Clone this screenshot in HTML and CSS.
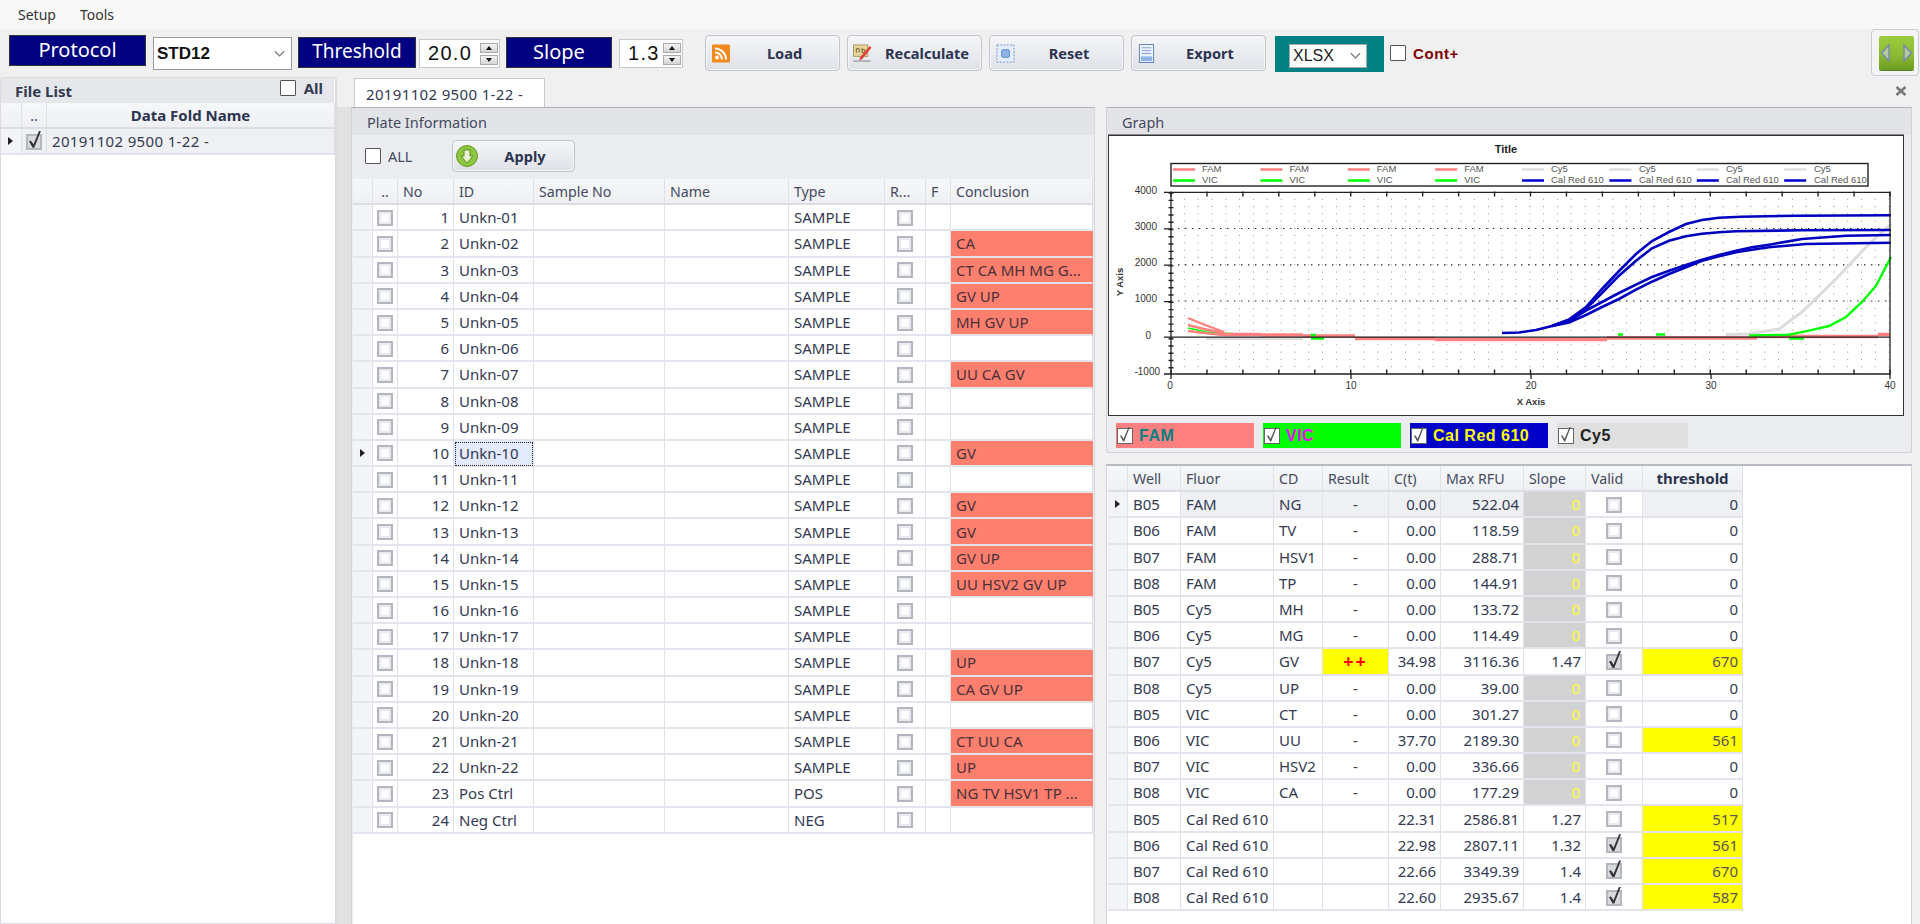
FILE: index.html
```html
<!DOCTYPE html>
<html lang="en">
<head>
    <meta charset="UTF-8">
    <title>Plate Analysis</title>
    <link rel="stylesheet" href="styles.css">
</head>
<body>
    <nav class="menubar">
        <span>Setup</span>
        <span>Tools</span>
    </nav>

    <header class="toolbar">
        <div class="tag tag-protocol">Protocol</div>
        <div class="combo"><b>STD12</b><svg class="chev" viewBox="0 0 12 8"><path d="M1 1l5 5 5-5"/></svg></div>
        <div class="tag tag-threshold">Threshold</div>
        <div class="spin spin-threshold"><span>20.0</span><i class="arrows"><i class="up"></i><i class="down"></i></i></div>
        <div class="tag tag-slope">Slope</div>
        <div class="spin spin-slope"><span>1.3</span><i class="arrows"><i class="up"></i><i class="down"></i></i></div>

        <button class="btn btn-load">
            <svg viewBox="0 0 18 18"><rect width="18" height="18" rx="1" fill="#f08a1c"/><circle cx="5" cy="13" r="2" fill="#fff"/><path d="M3 8a7 7 0 0 1 7 7M3 4a11 11 0 0 1 11 11" fill="none" stroke="#fff" stroke-width="2"/></svg>
            <span>Load</span>
        </button>
        <button class="btn btn-recalc">
            <svg viewBox="0 0 21 20"><rect x="1" y="1" width="15" height="12" fill="#e8d49a" stroke="#a89868"/><path d="M4 9V5h3v4M10 4v5h3V6h-3" fill="none" stroke="#706030"/><path d="M8 14L18 2l2 2-10 12-3 1z" fill="#e0403c"/><rect x="1" y="17" width="18" height="2" fill="#b0b0b0"/></svg>
            <span>Recalculate</span>
        </button>
        <button class="btn btn-reset">
            <svg viewBox="0 0 20 20"><rect x="1" y="1" width="18" height="18" fill="#e4eefa" stroke="#6a90cc" stroke-dasharray="2 1.5"/><rect x="6" y="6" width="8" height="8" rx="1" fill="#8fb4e4" stroke="#5c88c4"/></svg>
            <span>Reset</span>
        </button>
        <button class="btn btn-export">
            <svg viewBox="0 0 16 20"><rect x=".5" y=".5" width="15" height="19" fill="#eef3fb" stroke="#5c80b8"/><path d="M3 4h10M3 7h10M3 10h10" stroke="#7c9ccc"/><rect x="2" y="13" width="12" height="5" fill="#8fb4e4"/></svg>
            <span>Export</span>
        </button>

        <div class="format">
            <div class="format-box">XLSX<svg class="chev" viewBox="0 0 12 8"><path d="M1 1l5 5 5-5"/></svg></div>
        </div>
        <label class="cont"><span class="plain-box"></span>Cont+</label>

        <div class="nav-frame">
            <div class="nav-btn">
                <svg viewBox="0 0 35 34"><path d="M10 9v16L2.500 17zM25 9v16l7.500-8z" fill="#b4c8a0" stroke="#7888a8" stroke-width="1.4"/></svg>
            </div>
        </div>
    </header>

    <main class="workspace">
        <aside class="files">
            <div class="files-head">
                <strong>File List</strong>
                <label class="files-all"><span class="plain-box"></span>All</label>
            </div>
            <table class="grid files-grid">
                <colgroup><col class="fc1"><col class="fc2"><col></colgroup>
                <thead><tr><th></th><th class="mid">..</th><th class="mid strong">Data Fold Name</th></tr></thead>
                <tbody>
                    <tr class="current"><td class="rowhead"><i class="pointer"></i></td><td class="mid"><span class="cb on"></span></td><td class="wide">20191102 9500 1-22 -</td></tr>
                </tbody>
            </table>
        </aside>

        <section class="docs">
            <div class="tabstrip">
                <div class="tab">20191102 9500 1-22 -</div>
                <svg class="close" viewBox="0 0 12 10"><path d="M1.500 1l9 8M10.500 1l-9 8"/></svg>
            </div>

            <div class="tabpage">
                <section class="plate">
                    <h2 class="panel-title">Plate Information</h2>
                    <div class="plate-tools">
                        <label class="plate-all"><span class="plain-box"></span>ALL</label>
                        <button class="btn btn-apply">
                            <svg viewBox="0 0 22 22"><circle cx="11" cy="11" r="10.500" fill="#8cc63f" stroke="#6a9a2c"/><path d="M8 5h6v6h3l-6 7-6-7h3z" fill="#e8f5d0" stroke="#5c8c24"/></svg>
                            <span>Apply</span>
                        </button>
                    </div>
                    <div class="plate-body">
                        <table class="grid plate-grid">
                            <colgroup><col class="p1"><col class="p2"><col class="p3"><col class="p4"><col class="p5"><col class="p6"><col class="p7"><col class="p8"><col class="p9"><col></colgroup>
                            <thead>
                                <tr><th></th><th class="mid">..</th><th>No</th><th>ID</th><th>Sample No</th><th>Name</th><th>Type</th><th>R...</th><th>F</th><th>Conclusion</th></tr>
                            </thead>
                            <tbody>
                                <tr><td class="rowhead"></td><td class="mid"><span class="cb"></span></td><td class="num">1</td><td>Unkn-01</td><td></td><td></td><td>SAMPLE</td><td class="mid"><span class="cb"></span></td><td></td><td></td></tr>
                                <tr><td class="rowhead"></td><td class="mid"><span class="cb"></span></td><td class="num">2</td><td>Unkn-02</td><td></td><td></td><td>SAMPLE</td><td class="mid"><span class="cb"></span></td><td></td><td class="hit">CA</td></tr>
                                <tr><td class="rowhead"></td><td class="mid"><span class="cb"></span></td><td class="num">3</td><td>Unkn-03</td><td></td><td></td><td>SAMPLE</td><td class="mid"><span class="cb"></span></td><td></td><td class="hit">CT CA MH MG G...</td></tr>
                                <tr><td class="rowhead"></td><td class="mid"><span class="cb"></span></td><td class="num">4</td><td>Unkn-04</td><td></td><td></td><td>SAMPLE</td><td class="mid"><span class="cb"></span></td><td></td><td class="hit">GV UP</td></tr>
                                <tr><td class="rowhead"></td><td class="mid"><span class="cb"></span></td><td class="num">5</td><td>Unkn-05</td><td></td><td></td><td>SAMPLE</td><td class="mid"><span class="cb"></span></td><td></td><td class="hit">MH GV UP</td></tr>
                                <tr><td class="rowhead"></td><td class="mid"><span class="cb"></span></td><td class="num">6</td><td>Unkn-06</td><td></td><td></td><td>SAMPLE</td><td class="mid"><span class="cb"></span></td><td></td><td></td></tr>
                                <tr><td class="rowhead"></td><td class="mid"><span class="cb"></span></td><td class="num">7</td><td>Unkn-07</td><td></td><td></td><td>SAMPLE</td><td class="mid"><span class="cb"></span></td><td></td><td class="hit">UU CA GV</td></tr>
                                <tr><td class="rowhead"></td><td class="mid"><span class="cb"></span></td><td class="num">8</td><td>Unkn-08</td><td></td><td></td><td>SAMPLE</td><td class="mid"><span class="cb"></span></td><td></td><td></td></tr>
                                <tr><td class="rowhead"></td><td class="mid"><span class="cb"></span></td><td class="num">9</td><td>Unkn-09</td><td></td><td></td><td>SAMPLE</td><td class="mid"><span class="cb"></span></td><td></td><td></td></tr>
                                <tr><td class="rowhead"><i class="pointer"></i></td><td class="mid"><span class="cb"></span></td><td class="num">10</td><td class="focus">Unkn-10</td><td></td><td></td><td>SAMPLE</td><td class="mid"><span class="cb"></span></td><td></td><td class="hit">GV</td></tr>
                                <tr><td class="rowhead"></td><td class="mid"><span class="cb"></span></td><td class="num">11</td><td>Unkn-11</td><td></td><td></td><td>SAMPLE</td><td class="mid"><span class="cb"></span></td><td></td><td></td></tr>
                                <tr><td class="rowhead"></td><td class="mid"><span class="cb"></span></td><td class="num">12</td><td>Unkn-12</td><td></td><td></td><td>SAMPLE</td><td class="mid"><span class="cb"></span></td><td></td><td class="hit">GV</td></tr>
                                <tr><td class="rowhead"></td><td class="mid"><span class="cb"></span></td><td class="num">13</td><td>Unkn-13</td><td></td><td></td><td>SAMPLE</td><td class="mid"><span class="cb"></span></td><td></td><td class="hit">GV</td></tr>
                                <tr><td class="rowhead"></td><td class="mid"><span class="cb"></span></td><td class="num">14</td><td>Unkn-14</td><td></td><td></td><td>SAMPLE</td><td class="mid"><span class="cb"></span></td><td></td><td class="hit">GV UP</td></tr>
                                <tr><td class="rowhead"></td><td class="mid"><span class="cb"></span></td><td class="num">15</td><td>Unkn-15</td><td></td><td></td><td>SAMPLE</td><td class="mid"><span class="cb"></span></td><td></td><td class="hit">UU HSV2 GV UP</td></tr>
                                <tr><td class="rowhead"></td><td class="mid"><span class="cb"></span></td><td class="num">16</td><td>Unkn-16</td><td></td><td></td><td>SAMPLE</td><td class="mid"><span class="cb"></span></td><td></td><td></td></tr>
                                <tr><td class="rowhead"></td><td class="mid"><span class="cb"></span></td><td class="num">17</td><td>Unkn-17</td><td></td><td></td><td>SAMPLE</td><td class="mid"><span class="cb"></span></td><td></td><td></td></tr>
                                <tr><td class="rowhead"></td><td class="mid"><span class="cb"></span></td><td class="num">18</td><td>Unkn-18</td><td></td><td></td><td>SAMPLE</td><td class="mid"><span class="cb"></span></td><td></td><td class="hit">UP</td></tr>
                                <tr><td class="rowhead"></td><td class="mid"><span class="cb"></span></td><td class="num">19</td><td>Unkn-19</td><td></td><td></td><td>SAMPLE</td><td class="mid"><span class="cb"></span></td><td></td><td class="hit">CA GV UP</td></tr>
                                <tr><td class="rowhead"></td><td class="mid"><span class="cb"></span></td><td class="num">20</td><td>Unkn-20</td><td></td><td></td><td>SAMPLE</td><td class="mid"><span class="cb"></span></td><td></td><td></td></tr>
                                <tr><td class="rowhead"></td><td class="mid"><span class="cb"></span></td><td class="num">21</td><td>Unkn-21</td><td></td><td></td><td>SAMPLE</td><td class="mid"><span class="cb"></span></td><td></td><td class="hit">CT UU CA</td></tr>
                                <tr><td class="rowhead"></td><td class="mid"><span class="cb"></span></td><td class="num">22</td><td>Unkn-22</td><td></td><td></td><td>SAMPLE</td><td class="mid"><span class="cb"></span></td><td></td><td class="hit">UP</td></tr>
                                <tr><td class="rowhead"></td><td class="mid"><span class="cb"></span></td><td class="num">23</td><td>Pos Ctrl</td><td></td><td></td><td>POS</td><td class="mid"><span class="cb"></span></td><td></td><td class="hit">NG TV HSV1 TP ...</td></tr>
                                <tr><td class="rowhead"></td><td class="mid"><span class="cb"></span></td><td class="num">24</td><td>Neg Ctrl</td><td></td><td></td><td>NEG</td><td class="mid"><span class="cb"></span></td><td></td><td></td></tr>
                            </tbody>
                        </table>
                    </div>
                </section>

                <div class="analysis">
                    <section class="graph">
                        <h2 class="panel-title">Graph</h2>
                        <div class="chart">
                            <svg viewBox="1110 137 794 279">
                                <defs>
                                    <pattern id="dots" x="1172" y="193.4" width="13.82" height="7.28" patternUnits="userSpaceOnUse">
                                        <rect x="13" y="6.500" width="1" height="1" fill="#555"/>
                                    </pattern>
                                </defs>

                                <text class="t-title" x="1507" y="154" text-anchor="middle">Title</text>

                                <!-- legend -->
                                <rect x="1172" y="164.5" width="697" height="22.5" fill="#fff" stroke="#222" stroke-width="1.4"/>
                                <g class="lg-fam"><path d="M1174 170.5h22M1261.4 170.5h22M1348.8 170.5h22M1436.2 170.5h22"/></g>
                                <g class="lg-cy5"><path d="M1523 170.5h22M1610.4 170.5h22M1697.8 170.5h22M1785.2 170.5h22"/></g>
                                <g class="lg-vic"><path d="M1174 181.5h22M1261.4 181.5h22M1348.8 181.5h22M1436.2 181.5h22"/></g>
                                <g class="lg-cal"><path d="M1523 181.5h22M1610.4 181.5h22M1697.8 181.5h22M1785.2 181.5h22"/></g>
                                <g class="t-legend">
                                    <text x="1203" y="172.5">FAM</text><text x="1290.4" y="172.5">FAM</text><text x="1377.8" y="172.5">FAM</text><text x="1465.2" y="172.5">FAM</text>
                                    <text x="1552" y="172.5">Cy5</text><text x="1640" y="172.5">Cy5</text><text x="1727" y="172.5">Cy5</text><text x="1815" y="172.5">Cy5</text>
                                    <text x="1203" y="183.5">VIC</text><text x="1290.4" y="183.5">VIC</text><text x="1377.8" y="183.5">VIC</text><text x="1465.2" y="183.5">VIC</text>
                                    <text x="1552" y="183.5">Cal Red 610</text><text x="1640" y="183.5">Cal Red 610</text><text x="1727" y="183.5">Cal Red 610</text><text x="1815" y="183.5">Cal Red 610</text>
                                </g>

                                <!-- grid -->
                                <rect x="1172" y="193.4" width="719" height="181.6" fill="url(#dots)"/>
                                <path class="major" d="M1172 229.5h719M1172 265.8h719M1172 302h719"/>

                                <!-- curves -->
                                <g class="curve c-cy5">
                                    <path d="M1207 339.5h97"/>
                                    <path d="M1727 335.5L1750 335 1780 330 1803 313 1820 296.7 1837 280 1853 263 1870 245 1892 225"/>
                                </g>
                                <g class="curve c-vic">
                                    <path class="thin" d="M1189 326L1207 331 1225 334 1240 335"/>
                                    <path class="thin" d="M1189 329L1207 333 1225 335"/>
                                </g>
                                <g class="curve c-fam">
                                    <path d="M1189 319L1205 325.5 1225 333"/>
                                    <path d="M1189 326L1205 330 1225 334"/>
                                    <path d="M1189 332L1205 334 1225 336"/>
                                    <path class="thick" d="M1225 335.5h37M1262 336h42M1304 337h52M1356 339.5h80M1436 340.5h172M1608 339h150M1754 337.5h125M1879 335.5h12"/>
                                </g>
                                <g class="curve c-vic">
                                    <path d="M1312 336h5M1312 339.5h13M1619 335.5h5M1657 335.5h9M1790 339.5h15"/>
                                    <path d="M1750 336.5L1790 335.7 1810 331.7 1830 327 1847 318 1863 303 1877 286.7 1892 258"/>
                                </g>
                                <g class="curve c-cal">
                                    <path d="M1503 334L1520 333.5 1537 331 1553 327 1570 320.5 1587 308 1603 290 1620 272 1637 255 1653 242 1670 233 1687 225 1703 221 1720 218.7 1742 217.7 1798 216.7 1892 216.3"/>
                                    <path d="M1553 327L1570 321 1587 310 1603 294 1620 276.7 1637 261.7 1653 249.3 1670 241.7 1687 237.3 1703 234.7 1720 233.3 1737 232.3 1802 231.3 1892 231"/>
                                    <path d="M1553 327L1570 322 1587 311.7 1603 303 1620 294 1637 285.7 1653 278 1670 271.7 1687 266 1703 260.7 1720 256 1737 251.7 1753 248.3 1770 245.7 1803 240 1847 236.7 1892 236"/>
                                    <path d="M1553 327L1570 323.500 1587 316 1603 308 1620 300 1637 290.7 1653 282.7 1670 275 1687 268.3 1703 261.7 1720 257.3 1737 253.3 1753 250.7 1770 248.3 1807 245 1892 243.7"/>
                                </g>

                                <!-- axes -->
                                <path class="axis" d="M1172 193.4V375H1891V193.4H1172M1172 338.2H1891"/>
                                <line class="tick" x1="1172" y1="193.4" x2="1172" y2="375" stroke-dasharray="1.4 5.88"/>
                                <path class="axis" d="M1165 193.4h7M1165 229.8h7M1165 266.2h7M1165 302.6h7M1165 338.2h7M1165 375h7"/>
                                <line class="tick-x" x1="1171.3" y1="373" x2="1892" y2="373" stroke-dasharray="1.4 34.55"/>
                                <line class="tick-x" x1="1171.3" y1="195" x2="1892" y2="195" stroke-dasharray="1.4 34.55"/>
                                <path class="axis" d="M1172 375v5M1352 375v5M1532 375v5M1712 375v5M1891 375v5"/>

                                <g class="t-axis" text-anchor="end">
                                    <text x="1158" y="194.5">4000</text>
                                    <text x="1158" y="230.7">3000</text>
                                    <text x="1158" y="266.7">2000</text>
                                    <text x="1158" y="303">1000</text>
                                    <text x="1152" y="339.5">0</text>
                                    <text x="1161" y="375.5">-1000</text>
                                </g>
                                <g class="t-axis" text-anchor="middle">
                                    <text x="1171" y="390">0</text>
                                    <text x="1352" y="390">10</text>
                                    <text x="1532" y="390">20</text>
                                    <text x="1712" y="390">30</text>
                                    <text x="1891" y="390">40</text>
                                </g>
                                <text class="t-label" x="1532" y="406" text-anchor="middle">X Axis</text>
                                <text class="t-label" transform="translate(1124 283) rotate(-90)" text-anchor="middle">Y Axis</text>
                            </svg>
                        </div>
                        <div class="channels">
                            <label class="channel ch-fam"><span class="cb-lite"></span>FAM</label>
                            <label class="channel ch-vic"><span class="cb-lite"></span>VIC</label>
                            <label class="channel ch-cal"><span class="cb-lite"></span>Cal Red 610</label>
                            <label class="channel ch-cy5"><span class="cb-lite"></span>Cy5</label>
                        </div>
                    </section>

                    <div class="wells">
                        <table class="grid well-grid">
                            <colgroup><col class="w1"><col class="w2"><col class="w3"><col class="w4"><col class="w5"><col class="w6"><col class="w7"><col class="w8"><col class="w9"><col class="w10"></colgroup>
                            <thead>
                                <tr><th></th><th>Well</th><th>Fluor</th><th>CD</th><th>Result</th><th>C(t)</th><th>Max RFU</th><th>Slope</th><th>Valid</th><th class="mid strong">threshold</th></tr>
                            </thead>
                            <tbody>
                                <tr class="current"><td class="rowhead"><i class="pointer"></i></td><td class="blank">B05</td><td>FAM</td><td>NG</td><td class="mid">-</td><td class="num">0.00</td><td class="num">522.04</td><td class="off">0</td><td class="mid blank"><span class="cb"></span></td><td class="num">0</td></tr>
                                <tr><td class="rowhead"></td><td>B06</td><td>FAM</td><td>TV</td><td class="mid">-</td><td class="num">0.00</td><td class="num">118.59</td><td class="off">0</td><td class="mid"><span class="cb"></span></td><td class="num">0</td></tr>
                                <tr><td class="rowhead"></td><td>B07</td><td>FAM</td><td>HSV1</td><td class="mid">-</td><td class="num">0.00</td><td class="num">288.71</td><td class="off">0</td><td class="mid"><span class="cb"></span></td><td class="num">0</td></tr>
                                <tr><td class="rowhead"></td><td>B08</td><td>FAM</td><td>TP</td><td class="mid">-</td><td class="num">0.00</td><td class="num">144.91</td><td class="off">0</td><td class="mid"><span class="cb"></span></td><td class="num">0</td></tr>
                                <tr><td class="rowhead"></td><td>B05</td><td>Cy5</td><td>MH</td><td class="mid">-</td><td class="num">0.00</td><td class="num">133.72</td><td class="off">0</td><td class="mid"><span class="cb"></span></td><td class="num">0</td></tr>
                                <tr><td class="rowhead"></td><td>B06</td><td>Cy5</td><td>MG</td><td class="mid">-</td><td class="num">0.00</td><td class="num">114.49</td><td class="off">0</td><td class="mid"><span class="cb"></span></td><td class="num">0</td></tr>
                                <tr><td class="rowhead"></td><td>B07</td><td>Cy5</td><td>GV</td><td class="mid plus">++</td><td class="num">34.98</td><td class="num">3116.36</td><td class="num">1.47</td><td class="mid"><span class="cb on"></span></td><td class="num flag">670</td></tr>
                                <tr><td class="rowhead"></td><td>B08</td><td>Cy5</td><td>UP</td><td class="mid">-</td><td class="num">0.00</td><td class="num">39.00</td><td class="off">0</td><td class="mid"><span class="cb"></span></td><td class="num">0</td></tr>
                                <tr><td class="rowhead"></td><td>B05</td><td>VIC</td><td>CT</td><td class="mid">-</td><td class="num">0.00</td><td class="num">301.27</td><td class="off">0</td><td class="mid"><span class="cb"></span></td><td class="num">0</td></tr>
                                <tr><td class="rowhead"></td><td>B06</td><td>VIC</td><td>UU</td><td class="mid">-</td><td class="num">37.70</td><td class="num">2189.30</td><td class="off">0</td><td class="mid"><span class="cb"></span></td><td class="num flag">561</td></tr>
                                <tr><td class="rowhead"></td><td>B07</td><td>VIC</td><td>HSV2</td><td class="mid">-</td><td class="num">0.00</td><td class="num">336.66</td><td class="off">0</td><td class="mid"><span class="cb"></span></td><td class="num">0</td></tr>
                                <tr><td class="rowhead"></td><td>B08</td><td>VIC</td><td>CA</td><td class="mid">-</td><td class="num">0.00</td><td class="num">177.29</td><td class="off">0</td><td class="mid"><span class="cb"></span></td><td class="num">0</td></tr>
                                <tr><td class="rowhead"></td><td>B05</td><td>Cal Red 610</td><td></td><td></td><td class="num">22.31</td><td class="num">2586.81</td><td class="num">1.27</td><td class="mid"><span class="cb"></span></td><td class="num flag">517</td></tr>
                                <tr><td class="rowhead"></td><td>B06</td><td>Cal Red 610</td><td></td><td></td><td class="num">22.98</td><td class="num">2807.11</td><td class="num">1.32</td><td class="mid"><span class="cb on"></span></td><td class="num flag">561</td></tr>
                                <tr><td class="rowhead"></td><td>B07</td><td>Cal Red 610</td><td></td><td></td><td class="num">22.66</td><td class="num">3349.39</td><td class="num">1.4</td><td class="mid"><span class="cb on"></span></td><td class="num flag">670</td></tr>
                                <tr><td class="rowhead"></td><td>B08</td><td>Cal Red 610</td><td></td><td></td><td class="num">22.60</td><td class="num">2935.67</td><td class="num">1.4</td><td class="mid"><span class="cb on"></span></td><td class="num flag">587</td></tr>
                            </tbody>
                        </table>
                    </div>
                </div>
            </div>
        </section>
    </main>
</body>
</html>
```

FILE: styles.css
```css
/* General */
* {
    box-sizing: border-box;
}

html, body {
    height: 100%;
}

body {
    margin: 0;
    display: flex;
    flex-direction: column;
    overflow: hidden;
    font-family: "Noto Sans", "Liberation Sans", sans-serif;
    font-size: 15px;
    color: #333a52;
    background-color: #f0f0f0;
}

i {
    font-style: normal;
}

/* Menu */
.menubar {
    height: 29px;
    display: flex;
    align-items: center;
    gap: 24px;
    padding: 0 0 0 18px;
    background-color: #f8f8f8;
    font-size: 14px;
    color: #333;
}

/* Toolbar */
.toolbar {
    position: relative;
    height: 48px;
    display: flex;
    align-items: flex-start;
    padding: 6px 0 0 9px;
}

.tag {
    height: 31px;
    margin-top: 2px;
    background-color: #000080;
    border: 1px solid #333;
    color: #fff;
    font-size: 20px;
    line-height: 27px;
    text-align: center;
}

.tag-protocol {
    width: 137px;
    margin-top: 0;
}

.tag-threshold {
    width: 118px;
    margin-left: 6px;
    font-size: 19px;
}

.tag-slope {
    width: 106px;
    margin-left: 6px;
}

.combo {
    width: 139px;
    height: 33px;
    margin: 2px 0 0 7px;
    display: flex;
    align-items: center;
    justify-content: space-between;
    padding: 0 6px 0 3px;
    background-color: #fff;
    border: 1px solid #999;
    color: #111;
    font-family: "Liberation Sans", sans-serif;
    font-size: 17px;
}

.chev {
    width: 11px;
    height: 8px;
    fill: none;
    stroke: #777;
    stroke-width: 1.3;
}

.spin {
    height: 29px;
    margin: 4px 0 0 3px;
    display: flex;
    align-items: center;
    justify-content: space-between;
    padding: 0 1px 0 8px;
    background-color: #fff;
    border: 1px solid #c8c8c8;
    color: #111;
    font-family: "Liberation Sans", sans-serif;
    font-size: 20px;
    letter-spacing: 1.3px;
}

.spin-threshold {
    width: 81px;
}

.spin-slope {
    width: 64px;
    margin-left: 7px;
}

.arrows {
    width: 18px;
    display: flex;
    flex-direction: column;
    gap: 2px;
}

.arrows i {
    height: 10px;
    display: flex;
    align-items: center;
    justify-content: center;
    background: linear-gradient(#f4f4f4, #d4d4d4);
    border: 1px solid #aaa;
}

.up::after {
    content: "";
    border: 3.5px solid transparent;
    border-top: 0;
    border-bottom: 4px solid #111;
}

.down::after {
    content: "";
    border: 3.5px solid transparent;
    border-bottom: 0;
    border-top: 4px solid #111;
}

/* Buttons */
.btn {
    height: 36px;
    display: flex;
    align-items: center;
    padding: 0 0 0 6px;
    background: linear-gradient(#f5f6f8, #dfe1e8);
    border: 1px solid #c2c4cc;
    border-radius: 4px;
    box-shadow: inset 0 0 0 1px #f4f5f8;
    font-family: inherit;
    font-size: 14.6px;
    font-weight: bold;
    color: #2c3450;
}

.btn svg {
    flex: none;
    height: 19px;
}

.btn span {
    flex: 1;
    text-align: center;
}

.toolbar .btn {
    width: 135px;
}

.btn-load {
    margin-left: 22px;
}

.btn-load svg {
    width: 18px;
}

.btn-recalc,
.btn-reset,
.btn-export {
    margin-left: 7px;
}

.btn-recalc {
    padding-left: 4px;
}

.btn-recalc svg {
    width: 21px;
}

.btn-reset svg {
    width: 19px;
}

.btn-export svg {
    width: 17px;
}

.format {
    width: 109px;
    height: 36px;
    margin: 1px 0 0 9px;
    padding: 8px 17px 4px 14px;
    background-color: #008080;
}

.format-box {
    height: 24px;
    display: flex;
    align-items: center;
    justify-content: space-between;
    padding: 0 5px 0 3px;
    background-color: #fff;
    border: 1px solid #aaa;
    color: #222;
    font-family: "Liberation Sans", sans-serif;
    font-size: 16px;
}

.plain-box {
    width: 16px;
    height: 16px;
    flex: none;
    background-color: #fff;
    border: 1px solid #555;
    border-radius: 1px;
}

.cont {
    height: 36px;
    margin-left: 6px;
    display: flex;
    align-items: center;
    gap: 7px;
    color: #800000;
    font-family: "Liberation Sans", sans-serif;
    font-size: 15px;
    font-weight: bold;
    letter-spacing: .6px;
}

.nav-frame {
    position: absolute;
    top: 0;
    right: 1px;
    width: 48px;
    height: 47px;
    padding: 6px 6px 0 7px;
    background-color: #f4f4f6;
    border: 1px solid #c8ccd4;
    border-radius: 4px;
}

.nav-btn {
    width: 35px;
    height: 34px;
    background: linear-gradient(#9ccb3e, #8cbc34 55%, #6c9c1e);
    border-radius: 2px;
    box-shadow: 0 1px 0 #5c7c20;
}

.nav-btn svg {
    display: block;
}

/* Workspace */
.workspace {
    flex: 1;
    min-height: 0;
    display: flex;
}

/* File list */
.files {
    width: 337px;
    flex: none;
    display: flex;
    flex-direction: column;
    padding-right: 1px;
    background-color: #fff;
    border: 1px solid #dcdce0;
    border-right-width: 2px;
    border-radius: 3px 3px 0 0;
}

.files-head {
    height: 25px;
    flex: none;
    display: flex;
    justify-content: space-between;
    padding: 2px 11px 0 14px;
    background-color: #e6e7ea;
    font-size: 15px;
}

.files-head strong {
    line-height: 22px;
}

.files-all {
    display: flex;
    gap: 8px;
    font-weight: bold;
    line-height: 16px;
}

/* Tabs */
.docs {
    flex: 1;
    min-width: 0;
    display: flex;
    flex-direction: column;
}

.tabstrip {
    height: 30px;
    flex: none;
    display: flex;
    justify-content: space-between;
    padding: 1px 13px 0 17px;
}

.tab {
    width: 191px;
    height: 30px;
    padding: 5px 0 0 11px;
    background-color: #fff;
    border: 1px solid #c8c8d0;
    border-bottom: 0;
    font-size: 15px;
    letter-spacing: .35px;
    white-space: nowrap;
}

.close {
    width: 12px;
    height: 10px;
    margin-top: 8px;
    fill: none;
    stroke: #777;
    stroke-width: 2.6;
}

.tabpage {
    flex: 1;
    min-height: 0;
    display: flex;
    background: linear-gradient(90deg, #e2e2e2 14px, #f0f0f0 14px);
    padding-left: 14px;
}

/* Panels */
.panel-title {
    height: 27px;
    margin: 0;
    padding: 4px 0 0 15px;
    background-color: #e3e4e8;
    font-size: 14.5px;
    font-weight: normal;
    color: #444a60;
}

.plate {
    width: 744px;
    flex: none;
    display: flex;
    flex-direction: column;
    background-color: #ecedf1;
    border-top: 1px solid #b0b2bc;
    border-right: 1px solid #d8d8dc;
    border-left: 1px solid #d0d0d6;
}

.plate-tools {
    height: 44px;
    flex: none;
    display: flex;
    align-items: flex-start;
    padding-top: 5px;
}

.plate-all {
    height: 32px;
    margin-left: 13px;
    display: flex;
    align-items: center;
    gap: 7px;
    font-size: 14.5px;
    color: #444a60;
}

.btn-apply {
    width: 123px;
    height: 32px;
    margin-left: 40px;
    padding-left: 3px;
}

.btn-apply svg {
    width: 22px;
    height: 22px;
}

.btn-apply span {
    padding-right: 3px;
}

.plate-body {
    flex: 1;
    min-height: 0;
    margin-right: 1px;
    margin-left: 1px;
    background-color: #fff;
}

/* Grids */
.grid {
    border-collapse: separate;
    border-spacing: 0;
    table-layout: fixed;
}

.grid th,
.grid td {
    height: 26.2px;
    padding: 0 0 0 5px;
    overflow: hidden;
    white-space: nowrap;
    border-right: 1px solid #e0e1e8;
    border-bottom: 2px solid #e4e5ec;
    font-size: 15px;
    font-weight: normal;
    text-align: left;
}

.grid th {
    background: linear-gradient(#f6f7f9, #eff0f4);
    border-bottom-color: #dcdde4;
    font-size: 14.2px;
    color: #444a60;
}

.grid th.strong {
    font-size: 15px;
    font-weight: bold;
    color: #2c3450;
}

.grid th.mid,
.grid td.mid {
    padding: 0;
    text-align: center;
}

.grid td.num {
    padding: 0 4px 0 0;
    text-align: right;
}

.grid td.rowhead {
    padding: 0 0 0 7px;
    background-color: #f3f4f8;
}

.grid td.wide {
    letter-spacing: .35px;
}

.pointer {
    display: block;
    width: 0;
    height: 0;
    border-top: 4.5px solid transparent;
    border-bottom: 4.5px solid transparent;
    border-left: 5px solid #222;
}

.current td {
    background-color: #eff0f3;
}

.current td.blank {
    background-color: #fff;
}

.files-grid {
    width: 334px;
}

.fc1 {
    width: 21px;
}

.fc2 {
    width: 25px;
}

.p1 { width: 20px; }
.p2 { width: 25px; }
.p3 { width: 56px; }
.p4 { width: 80px; }
.p5 { width: 131px; }
.p6 { width: 124px; }
.p7 { width: 96px; }
.p8 { width: 41px; }
.p9 { width: 25px; }

.plate-grid {
    width: 740px;
}

.grid td.hit {
    background-color: #ff7f6e;
    border-right-color: #ff7f6e;
    color: #4a3038;
}

.grid td.focus {
    background-color: #e2eafc;
    outline: 1px dotted #223;
    outline-offset: -2px;
}

/* Check boxes */
.cb {
    position: relative;
    display: inline-block;
    width: 16px;
    height: 16px;
    margin-top: -3px;
    vertical-align: middle;
    background-color: #fff;
    border: 2px solid #b4b6be;
    box-shadow: inset 0 0 0 2px #e8eaee;
}

.cb.on {
    background-color: #d8d9de;
    box-shadow: none;
}

.cb.on::after,
.cb-lite::after {
    content: "";
    position: absolute;
    left: 1px;
    top: -5px;
    width: 12px;
    height: 17px;
    background-color: #333;
    clip-path: polygon(0 62%, 16% 58%, 38% 80%, 84% 0, 100% 0, 44% 100%, 30% 100%);
}

/* Graph */
.analysis {
    flex: 1;
    min-width: 0;
    margin: 0 8px 0 11px;
    display: flex;
    flex-direction: column;
    gap: 11px;
}

.graph {
    height: 346px;
    flex: none;
    display: flex;
    flex-direction: column;
    background-color: #ecedf1;
    border: 1px solid #d0d0d6;
    border-top-color: #b0b2bc;
    border-radius: 0 0 3px 3px;
}

.chart {
    width: 796px;
    height: 281px;
    margin-left: 1px;
    background-color: #fff;
    border: 1px solid #333;
    box-shadow: 0 -1px 0 #888;
}

.chart svg {
    display: block;
    width: 794px;
    height: 279px;
    font-family: "Liberation Sans", Arial, sans-serif;
}

.t-title {
    font-size: 11px;
    font-weight: bold;
    fill: #222;
}

.t-legend {
    font-size: 9.5px;
    fill: #555;
}

.t-axis {
    font-size: 10px;
    fill: #333;
}

.t-label {
    font-size: 9.5px;
    font-weight: bold;
    fill: #333;
}

.lg-fam, .lg-vic, .lg-cy5, .lg-cal {
    fill: none;
    stroke-width: 2.4;
}

.lg-fam { stroke: #ff8080; }
.lg-vic { stroke: #00ff00; }
.lg-cy5 { stroke: #e0e0e0; }
.lg-cal { stroke: #0000cd; }

.major {
    fill: none;
    stroke: #222;
    stroke-width: 1.2;
    stroke-dasharray: 1.4 5.6;
}

.curve {
    fill: none;
    stroke-width: 2.4;
}

.curve .thick {
    stroke-width: 3.4;
}

.curve .thin {
    stroke-width: 1.6;
}

.c-fam { stroke: #ff8080; }
.c-vic { stroke: #00ff00; }
.c-cy5 { stroke: #dcdcdc; stroke-width: 3; }
.c-cal { stroke: #0000c0; stroke-width: 2.6; }

.axis {
    fill: none;
    stroke: #222;
    stroke-width: 1.3;
}

.tick,
.tick-x {
    stroke: #222;
    stroke-width: 5;
}

/* Channels */
.channels {
    display: flex;
    gap: 9px;
    padding: 7px 0 0 9px;
}

.channel {
    width: 138px;
    height: 25px;
    display: flex;
    align-items: center;
    gap: 6px;
    padding-left: 1px;
    font-family: "Liberation Sans", sans-serif;
    font-size: 16px;
    font-weight: bold;
    letter-spacing: .5px;
}

.cb-lite {
    position: relative;
    width: 16px;
    height: 16px;
    flex: none;
    background-color: #fff;
    border: 1px solid #666;
}

.cb-lite::after {
    top: -2px;
    left: 2px;
    width: 10px;
    height: 15px;
    background-color: #555;
    clip-path: polygon(0 62%, 12% 58%, 36% 82%, 88% 0, 100% 0, 42% 100%, 32% 100%);
}

.ch-fam {
    background-color: #ff8080;
    color: #008080;
}

.ch-vic {
    background-color: #00ff00;
    color: #ff00ff;
}

.ch-cal {
    background-color: #0000c8;
    color: #ffff00;
}

.ch-cy5 {
    width: 131px;
    background-color: #e0e0e0;
    color: #222;
}

/* Well table */
.wells {
    flex: 1;
    min-height: 0;
    background-color: #fff;
    border: 1px solid #d0d0d6;
    border-top: 2px solid #b8bac4;
    border-bottom: 0;
}

.well-grid {
    width: 635px;
    margin-left: 1px;
}

.w1 { width: 20px; }
.w2 { width: 53px; }
.w3 { width: 93px; }
.w4 { width: 49px; }
.w5 { width: 66px; }
.w6 { width: 52px; }
.w7 { width: 83px; }
.w8 { width: 62px; }
.w9 { width: 57px; }
.w10 { width: 100px; }

.grid td.off {
    padding: 0 5px 0 0;
    background-color: #d2d2d2;
    color: #ffff30;
    text-align: right;
}

.grid td.plus {
    background-color: #ffff00;
    color: #ff0000;
    font-size: 18px;
    font-weight: bold;
    letter-spacing: 2px;
}

.grid td.flag {
    background-color: #ffff00;
    color: #555;
}
```
